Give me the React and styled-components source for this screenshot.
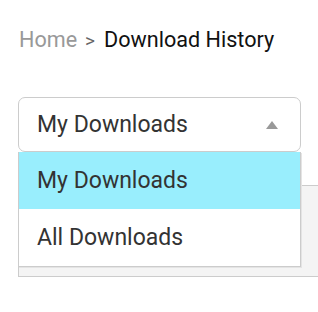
import React from "react";
import styled, { createGlobalStyle } from "styled-components";

const GlobalStyle = createGlobalStyle`
  html, body {
    margin: 0;
    padding: 0;
    background: #fff;
    overflow: hidden;
  }
  body {
    font-family: Roboto, "Noto Sans", sans-serif;
  }
`;

const Page = styled.div`
  width: 318px;
  height: 312px;
  padding: 25px 0 0 18px;
  box-sizing: border-box;
  overflow: hidden;
`;

const Breadcrumb = styled.div`
  display: flex;
  align-items: baseline;
  font-size: 21.6px;
  line-height: 30px;
  color: #111;
  padding-left: 1px;
`;

const Crumb = styled.span`
  color: ${(props) => (props.muted ? "#999" : "#111")};
`;

const Sep = styled.span`
  font-size: 19px;
  color: #666;
  margin: 0 9px 0 8px;
`;

const SelectWrap = styled.div`
  position: relative;
  width: 283px;
  margin-top: 41px;
`;

const SelectBox = styled.div`
  display: flex;
  align-items: center;
  justify-content: space-between;
  height: 55px;
  box-sizing: border-box;
  padding: 0 22px 0 18px;
  border: 1px solid #ccc;
  border-radius: 7px;
  font-size: 23px;
  color: #333;
`;

const Caret = styled.span`
  width: 0;
  height: 0;
  border-left: 6px solid transparent;
  border-right: 6px solid transparent;
  border-bottom: 8px solid #999;
`;

const Menu = styled.div`
  position: absolute;
  top: 55px;
  left: 0;
  width: 283px;
  box-sizing: border-box;
  background: #fff;
  border: 1px solid #ccc;
  border-top: none;
  box-shadow: 1px 1px 0 #e4e4e4;
  z-index: 2;
`;

const MenuItem = styled.div`
  height: 57px;
  display: flex;
  align-items: center;
  padding-left: 18px;
  font-size: 23px;
  color: #333;
  background: ${(props) => (props.active ? "#99eefd" : "#fff")};
`;

const Panel = styled.div`
  margin-top: 33px;
  width: 300px;
  height: 92px;
  box-sizing: border-box;
  background: #f4f4f4;
  border: 1px solid #ccc;
  border-right: none;
`;

const options = ["My Downloads", "All Downloads"];

const App = () => {
  return (
    <Page>
      <GlobalStyle />
      <Breadcrumb>
        <Crumb muted>Home</Crumb>
        <Sep>&gt;</Sep>
        <Crumb>Download History</Crumb>
      </Breadcrumb>
      <SelectWrap>
        <SelectBox>
          <span>My Downloads</span>
          <Caret />
        </SelectBox>
        <Menu>
          {options.map((opt, idx) => (
            <MenuItem key={opt} active={idx === 0}>
              {opt}
            </MenuItem>
          ))}
        </Menu>
      </SelectWrap>
      <Panel />
    </Page>
  );
};

export default App;
